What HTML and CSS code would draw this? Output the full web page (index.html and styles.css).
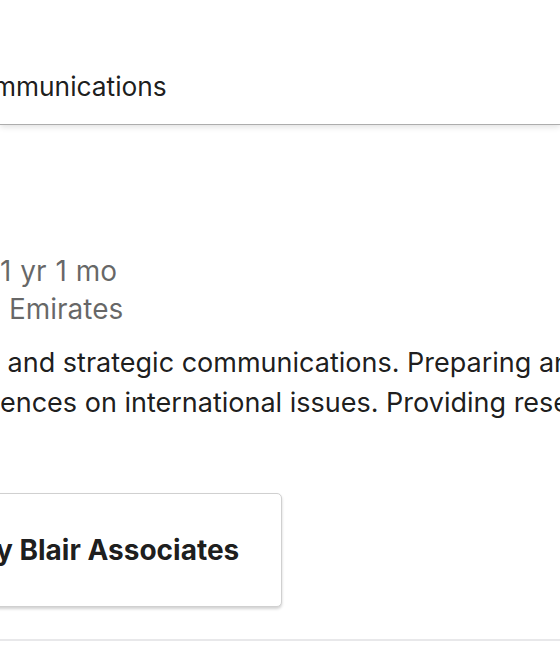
FILE: index.html
```html
<!DOCTYPE html>
<html lang="en">
<head>
<meta charset="utf-8">
<link rel="stylesheet" href="styles.css">
</head>
<body>
<div class="page">
  <header class="topbar">
    <div class="topbar-title">mmunications</div>
  </header>
  <main class="content">
    <div class="meta">
      <div class="meta-line">1 yr 1 mo</div>
      <div class="meta-line loc">&nbsp;Emirates</div>
    </div>
    <div class="desc">
      <div class="desc-line">&nbsp;and strategic communications. Preparing and delivering</div>
      <div class="desc-line">ences on international issues. Providing research</div>
    </div>
    <div class="card-row">
      <div class="card">
        <span class="card-label">y Blair Associates</span>
      </div>
    </div>
  </main>
  <div class="divider"></div>
</div>
</body>
</html>
```

FILE: styles.css
```css
* { box-sizing: border-box; }
html, body { margin: 0; padding: 0; background: #fff; }
body {
  font-family: Inter, "Noto Sans", "Liberation Sans", sans-serif;
  color: rgba(0,0,0,0.9);
  width: 560px;
  height: 652px;
  overflow: hidden;
}
.page { width: 560px; overflow: hidden; }
.topbar {
  height: 125px;
  background: #fff;
  border-bottom: 1px solid #adadad;
  box-shadow: 0 2px 6px rgba(0,0,0,0.12);
  display: flex;
  align-items: flex-end;
  padding-bottom: 21px;
  position: relative;
}
.topbar-title {
  font-size: 26.3px;
  line-height: 32px;
  margin-left: -7px;
  white-space: nowrap;
}
.content { padding-top: 127px; }
.meta { display: flex; flex-direction: column; }
.meta-line {
  font-size: 28px;
  line-height: 38px;
  color: rgba(0,0,0,0.6);
  white-space: nowrap;
  word-spacing: 1px;
}
.desc { margin-top: 15px; }
.desc-line {
  font-size: 27px;
  line-height: 40px;
  white-space: nowrap;
}
.card-row { margin-top: 70px; }
.card {
  width: 290px;
  height: 114px;
  margin-left: -8px;
  border: 1px solid #d0d0d0;
  border-radius: 5px;
  box-shadow: 0 2px 3px rgba(0,0,0,0.18);
  display: flex;
  align-items: center;
  background: #fff;
}
.card-label {
  font-size: 28px;
  font-weight: 700;
  white-space: nowrap;
  margin-left: 3px;
}
.divider {
  margin-top: 32px;
  height: 2px;
  background: #e8e8ea;
}
```
